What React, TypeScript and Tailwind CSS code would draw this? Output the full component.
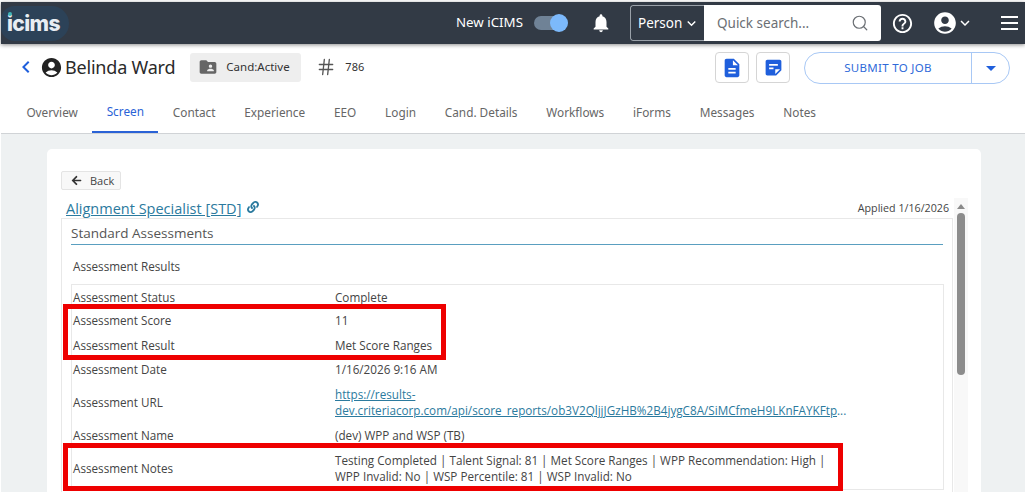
import { Hash, Search } from 'lucide-react';
import { FaArrowLeft, FaLink } from 'react-icons/fa';
import {
    MdAccountCircle,
    MdArrowDropDown,
    MdChevronLeft,
    MdDescription,
    MdFolderShared,
    MdHelpOutline,
    MdKeyboardArrowDown,
    MdNotifications,
    MdStickyNote2,
} from 'react-icons/md';

const tabs = ['Overview', 'Screen', 'Contact', 'Experience', 'EEO', 'Login', 'Cand. Details', 'Workflows', 'iForms', 'Messages', 'Notes'];

function TopBar() {
    return (
        <div className="flex h-[42px] items-center bg-[#323a45] text-white shadow-[0_1px_4px_rgba(0,0,0,0.45)] relative z-10">
            <div className="relative flex h-[35px] w-[68px] items-center rounded-r-[18px] rounded-l-[14px] bg-[#2c4258] pl-[6px]">
                <span className="absolute left-[7px] top-[6px] h-[4px] w-[4px] rounded-full bg-[#3fb5b8]" />
                <span className="font-['Inter',sans-serif] text-[21px] font-extrabold leading-none tracking-[-0.6px] text-[#e8edf2]">icims</span>
            </div>
            <span className="ml-[387px] w-[67px] text-[13.3px]">New iCIMS</span>
            <div className="relative ml-[11px] h-[14px] w-[29px] rounded-full bg-[#6f8296]">
                <span className="absolute -top-[2px] -right-[5px] h-[18px] w-[18px] rounded-full bg-[#7cb9fb]" />
            </div>
            <MdNotifications className="ml-[27px] text-[22px]" />
            <div className="ml-[18px] flex h-[36px] w-[251px] overflow-hidden rounded-[3px]">
                <div className="flex w-[74px] items-center rounded-l-[3px] border border-r-0 border-[#9aa1a9] pl-[7px] text-[13.5px]">
                    Person
                    <MdKeyboardArrowDown className="ml-[1px] text-[17px]" />
                </div>
                <div className="flex flex-1 items-center justify-between bg-white pl-[13px] pr-[12px] text-[13.5px] text-[#6b6f74]">
                    Quick search...
                    <Search className="h-[18px] w-[18px]" strokeWidth={1.6} />
                </div>
            </div>
            <MdHelpOutline className="ml-[10px] text-[23px]" />
            <MdAccountCircle className="ml-[18px] text-[26px]" />
            <MdKeyboardArrowDown className="-ml-[2px] text-[18px]" />
            <div className="ml-[27px] flex w-[17px] flex-col gap-[4px]">
                <span className="h-[2px] bg-white" />
                <span className="h-[2px] bg-white" />
                <span className="h-[2px] bg-white" />
            </div>
        </div>
    );
}

function NameBar() {
    return (
        <div className="flex h-[45px] items-center pt-[1px] pr-[15px] text-[#333]">
            <MdChevronLeft className="ml-[13px] text-[24px] text-[#1f5fdc]" />
            <MdAccountCircle className="ml-[2px] text-[23px] text-[#222]" />
            <span className="ml-[2px] text-[18px] tracking-[-0.2px] text-[#2a2a2a]">Belinda Ward</span>
            <div className="ml-[15px] flex h-[29px] w-[111px] items-center rounded-[3px] bg-[#eeeeee] pl-[8px] text-[11.5px]">
                <MdFolderShared className="text-[20px] text-[#666]" />
                <span className="ml-[8px]">Cand:Active</span>
            </div>
            <Hash className="ml-[15px] h-[20px] w-[20px] text-[#555]" strokeWidth={1.6} />
            <span className="ml-[9px] text-[11px]">786</span>
            <div className="ml-auto mt-[1px] flex h-[31px] w-[34px] items-center justify-center rounded-[4px] border border-[#d5d5d5]">
                <MdDescription className="text-[22px] text-[#1f5fdc]" />
            </div>
            <div className="ml-[7px] mt-[1px] flex h-[31px] w-[34px] items-center justify-center rounded-[4px] border border-[#d5d5d5]">
                <MdStickyNote2 className="text-[21px] text-[#1f5fdc]" />
            </div>
            <div className="ml-[14px] mt-[1px] flex h-[32px] w-[206px] items-center rounded-full border border-[#a8c8f5] text-[#2f6ad9]">
                <span className="flex-1 text-center text-[11.5px] tracking-[0.3px]">SUBMIT TO JOB</span>
                <div className="flex h-full w-[38px] items-center justify-center border-l border-[#a8c8f5]">
                    <MdArrowDropDown className="text-[24px] text-[#1f5fdc]" />
                </div>
            </div>
        </div>
    );
}

function Tabs() {
    return (
        <div className="flex h-[45px] border-b border-[#d0d3d6] pl-[11px] text-[11.8px] text-[#666]">
            {tabs.map(tab => (
                <div
                    key={tab}
                    className={`flex items-center px-[14.4px] pt-[3px] ${tab === 'Screen' ? 'border-b-2 border-[#2a62d6] text-[#2a62d6]' : ''}`}
                >
                    {tab}
                </div>
            ))}
        </div>
    );
}

function Row({ label, height, children }: { label: string; height: string; children: React.ReactNode }) {
    return (
        <div className={`flex items-center ${height}`}>
            <div className="w-[263px] shrink-0 pl-[1px]">{label}</div>
            <div className="w-[515px] min-w-0">{children}</div>
        </div>
    );
}

function ResultsTable() {
    return (
        <div className="relative ml-[9px] mt-[10px] h-[206px] w-[873px] border border-[#e8e8e8] text-[11.7px]">
            <Row label="Assessment Status" height="h-[23px]">Complete</Row>
            <Row label="Assessment Score" height="h-[24.5px]">11</Row>
            <Row label="Assessment Result" height="h-[24.5px]">Met Score Ranges</Row>
            <Row label="Assessment Date" height="h-[24.5px]">1/16/2026 9:16 AM</Row>
            <Row label="Assessment URL" height="h-[41px]">
                <a className="block text-[#2b7a9e] underline">https://results-</a>
                <span className="block whitespace-nowrap">
                    <a className="text-[#2b7a9e] underline">dev.criteriacorp.com/api/score_reports/ob3V2QljjJGzHB%2B4jygC8A/SiMCfmeH9LKnFAYKFtp</a>
                    <span className="text-[#2b7a9e]">...</span>
                </span>
            </Row>
            <Row label="Assessment Name" height="h-[24.5px]">(dev) WPP and WSP (TB)</Row>
            <Row label="Assessment Notes" height="h-[41px]">
                Testing Completed | Talent Signal: 81 | Met Score Ranges | WPP Recommendation: High | WPP Invalid: No | WSP Percentile: 81 | WSP Invalid: No
            </Row>
            {/* callouts drawn over the screenshot */}
            <div className="absolute left-[-9px] top-[19px] h-[56px] w-[383px] border-[5px] border-[#ee0000]" />
            <div className="absolute left-[-9px] top-[158px] h-[48px] w-[780px] border-[5px] border-[#ee0000]" />
        </div>
    );
}

function Card() {
    return (
        <div className="ml-[46px] mt-[15px] h-[343px] w-[934px] overflow-hidden rounded-t-[5px] bg-white pl-[14px] pt-[22px] font-['Open_Sans','Noto_Sans',sans-serif] text-[12px] leading-[16px] text-[#444]">
            <div className="flex h-[19px] w-[60px] items-center gap-[8px] rounded-[2px] border border-[#e4e4e4] bg-[#f8f8f8] pl-[9px] text-[11px]">
                <FaArrowLeft className="text-[11px] text-[#333]" />
                Back
            </div>
            <div className="relative flex">
                <div className="w-[892px]">
                    <div className="flex h-[28px] items-center justify-between pl-[5px] pr-[4px] pt-[9px]">
                        <div className="flex items-center gap-[6px]">
                            <a className="text-[14.5px] text-[#2b7a9e] underline">Alignment Specialist [STD]</a>
                            <FaLink className="-mt-[4px] text-[12px] text-[#2b7a9e]" />
                        </div>
                        <span className="-mt-[1px] text-[10.7px]">Applied 1/16/2026</span>
                    </div>
                    <div className="h-[400px] border border-[#e8e8e8]">
                        <div className="ml-[9px] mr-[9px] h-[26px] border-b border-[#5a9fc0] pt-[5px] text-[13.5px] leading-[18px] text-[#555]">
                            Standard Assessments
                        </div>
                        <div className="ml-[11px] mt-[13px] h-[16px] text-[11.7px]">Assessment Results</div>
                        <ResultsTable />
                    </div>
                </div>
                <div className="ml-[1px] mt-[8px] flex w-[14px] flex-col items-center bg-[#f8f8f8] pt-[6px]">
                    <span className="h-0 w-0 border-x-[4px] border-b-[5px] border-x-transparent border-b-[#8a8a8a]" />
                    <span className="mt-[4px] h-[162px] w-[8px] rounded-full bg-[#8c8c8c]" />
                </div>
            </div>
        </div>
    );
}

export default function App() {
    return (
        <div className="h-[498px] w-[1025px] overflow-hidden bg-white pl-px pt-[2px] font-['Noto_Sans',sans-serif]">
            <TopBar />
            <NameBar />
            <Tabs />
            <div className="h-[358px] overflow-hidden bg-[#eef1f2]">
                <Card />
            </div>
        </div>
    );
}
